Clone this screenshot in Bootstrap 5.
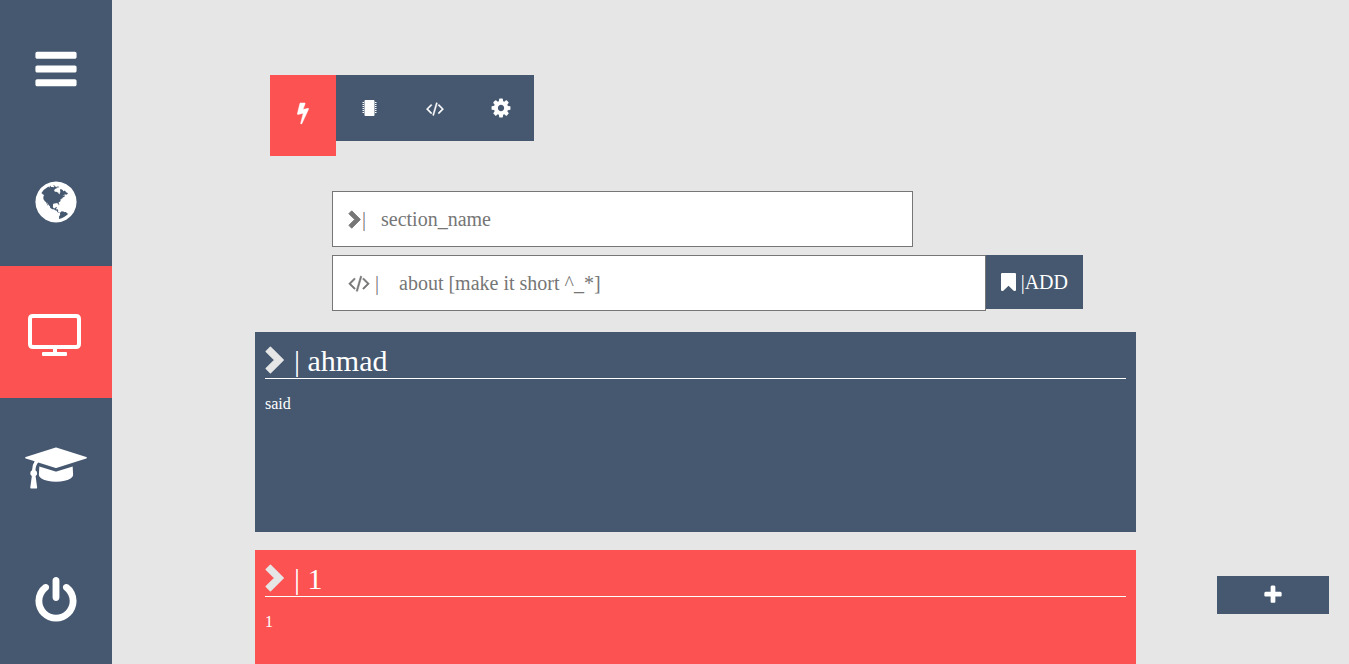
<!DOCTYPE html>
<html lang="en">
<head>
<meta charset="utf-8">
<meta name="viewport" content="width=device-width, initial-scale=1">
<title>Sections</title>
<link href="https://cdn.jsdelivr.net/npm/bootstrap@5.3.0/dist/css/bootstrap.min.css" rel="stylesheet">
<style>
:root { --slate: #455870; --coral: #fc5252; --paper: #e6e6e6; }
body { background: var(--paper); font-family: "Liberation Serif", "Times New Roman", serif; color: #fff; }
svg { fill: currentColor; display: block; flex-shrink: 0; overflow: visible; }
.side { width: 112px; background: var(--slate); }
.side a { color: #fff; padding-top: 6px; }
.side a.active { background: var(--coral); }
.workspace { overflow-y: auto; scrollbar-width: none; padding: 75px 213px 20px 143px; }
.workspace::-webkit-scrollbar { display: none; }
.tabs { height: 116px; padding-left: 15px; }
.tabs button { width: 66px; height: 66px; border: 0; border-radius: 0; background: var(--slate); color: #fff; }
.tabs button.active { height: 81px; background: var(--coral); }
.entry { padding: 0 53px 0 77px; margin-bottom: 21px; }
.field { color: #767676; }
.field.name-field { margin: 0 170px 8px 0; }
.field input { height: 56px; border: 1px solid #767676; border-radius: 0; font-size: 20px; padding: 1px 15px 0 29px; }
.field.about-field input { padding-left: 42px; }
.field input::placeholder { color: #767676; opacity: 1; }
.field svg { position: absolute; left: 16px; top: 0; bottom: 0; margin: auto 0; }
.add { height: 54px; padding: 0 15px; gap: 5px; border: 0; background: var(--slate); color: #fff; font-size: 20px; }
.panel { height: 200px; padding: 10px; margin-bottom: 18px; background: var(--slate); }
.panel.hot { background: var(--coral); }
.panel h2 { height: 37px; gap: 10px; margin-bottom: 13px; border-bottom: 1px solid #fff; font-size: 30px; font-weight: 400; line-height: 38px; }
.panel h2 svg { color: var(--paper); margin-top: 4px; }
.panel p { font-size: 16px; line-height: 24px; margin: 0; }
.plus { right: 20px; bottom: 50px; width: 112px; height: 38px; border: 0; background: var(--slate); color: #fff; }
</style>
</head>
<body>
<svg class="d-none" aria-hidden="true">
  <symbol id="chevron" viewBox="0 0 19 28"><path d="M5.400 1.200L1.200 5.400 9.800 14 1.200 22.600 5.400 26.800 18.200 14z" stroke="currentColor" stroke-width="1.400" stroke-linejoin="round"/></symbol>
  <symbol id="code" viewBox="0 0 1920 1792"><path stroke="currentColor" stroke-width="50" d="M617 1399l-50 50q-10 10-23 10t-23-10l-466-466q-10-10-10-23t10-23l466-466q10-10 23-10t23 10l50 50q10 10 10 23t-10 23l-393 393 393 393q10 10 10 23t-10 23zm591-1067l-373 1291q-4 13-15.500 19.500t-23.500 2.500l-62-17q-13-4-19.500-15.500t-2.500-24.500l373-1291q4-13 15.500-19.500t23.500-2.500l62 17q13 4 19.500 15.500t2.500 24.500zm657 651l-466 466q-10 10-23 10t-23-10l-50-50q-10-10-10-23t10-23l393-393-393-393q-10-10-10-23t10-23l50-50q10-10 23-10t23 10l466 466q10 10 10 23t-10 23z"/></symbol>
</svg>
<div class="d-flex vh-100">
  <nav class="side d-flex flex-column flex-shrink-0" aria-label="Main">
    <a href="#menu" aria-label="Menu" class="d-flex align-items-center justify-content-center h-100">
      <svg width="48" height="48" viewBox="0 0 1792 1792"><path d="M1664 1344v128q0 26-19 45t-45 19H192q-26 0-45-19t-19-45v-128q0-26 19-45t45-19h1408q26 0 45 19t19 45zm0-512v128q0 26-19 45t-45 19H192q-26 0-45-19t-19-45V832q0-26 19-45t45-19h1408q26 0 45 19t19 45zm0-512v128q0 26-19 45t-45 19H192q-26 0-45-19t-19-45V320q0-26 19-45t45-19h1408q26 0 45 19t19 45z"/></svg></a>
    <a href="#world" aria-label="World" class="d-flex align-items-center justify-content-center h-100">
      <svg width="48" height="48" viewBox="0 0 1792 1792"><path d="M896 128q209 0 385.500 103t279.500 279.500 103 385.500-103 385.500-279.500 279.500-385.500 103-385.500-103-279.500-279.500-103-385.500 103-385.500 279.500-279.500 385.500-103zm274 521q-2 1-9.500 9.500t-13.500 9.500q2 0 4.500-5t5-11 3.500-7q6-7 22-15 14-6 52-12 34-8 51 11-2-2 9.500-13t14.500-12q3-2 15-4.500t15-7.500l2-22q-12 1-17.500-7t-6.500-21q0 2-6 8 0-7-4.500-8t-11.500 1-9 1q-10-3-15-7.500t-8-16.500-4-15q-2-5-9.500-11t-9.500-10q-1-2-2.500-5.500t-3-6.500-4-5.500-5.500-2.500-7 5-7.500 10-4.500 5q-3-2-6-1.500t-4.500 1-4.500 3-5 3.500q-3 2-8.500 3t-8.500 2q15-5-1-11-10-4-16-3 9-4 7.500-12t-8.500-14h5q-1-4-8.500-8.500t-17.500-8.500-13-6q-8-5-34-9.500t-33-.5q-5 6-4.500 10.500t4 14 3.500 12.500q1 6-5.500 13t-6.500 12q0 7 14 15.500t10 21.500q-3 8-16 16t-16 12q-5 8-1.500 18.500t10.500 16.500q2 2 1.500 4t-3.500 4.500-5.500 4-6.500 3.500l-3 2q-11 5-20.500-6t-13.500-26q-7-25-16-30-23-8-29 1-5-13-41-26-25-9-58-4 6-1 0-15-7-15-19-12 3-6 4-17.500t1-13.500q3-13 12-23 1-1 7-8.500t9.500-13.500.5-6q35 4 50-11 5-5 11.500-17t10.500-17q9-6 14-5.500t14.500 5.500 14.500 5q14 1 15.500-11t-7.500-20q12 1 3-17-4-7-8-9-12-4-27 5-8 4 2 8-1-1-9.500 10.500t-16.500 17.500-16-5q-1-1-5.500-13.500t-9.500-13.500q-8 0-16 15 3-8-11-15t-24-8q19-12-8-27-7-4-20.500-5t-19.500 4q-5 7-5.500 11.500t5 8 10.500 5.500 11.500 4 8.500 3q14 10 8 14-2 1-8.500 3.500t-11.500 4.500-6 4q-3 4 0 14t-2 14q-5-5-9-17.500t-7-16.500q7 9-25 6l-10-1q-4 0-16 2t-20.500 1-13.500-8q-4-8 0-20 1-4 4-2-4-3-11-9.500t-10-8.500q-46 15-94 41 6 1 12-1 5-2 13-6.500t10-5.500q34-14 42-7l5-5q14 16 20 25-7-4-30-1-20 6-22 12 7 12 5 18-4-3-11.500-10t-14.500-11-15-5q-16 0-22 1-146 80-235 222 7 7 12 8 4 1 5 9t2.500 11 11.500-3q9 8 3 19 1-1 44 27 19 17 21 21 3 11-10 18-1-2-9-9t-9-4q-3 5 .5 18.500t10.500 12.500q-7 0-9.500 16t-2.500 35.500-1 23.500l2 1q-3 12 5.500 34.500t21.500 19.500q-13 3 20 43 6 8 8 9 3 2 12 7.500t15 10 10 10.500q4 5 10 22.500t14 23.500q-2 6 9.500 20t10.500 23q-1 0-2.500 1t-2.500 1q3 7 15.500 14t15.500 13q1 3 2 10t3 11 8 2q2-20-24-62-15-25-17-29-3-5-5.500-15.500t-4.500-14.500q2 0 6 1.500t8.500 3.500 7.500 4 2 3q-3 7 2 17.500t12 18.500 17 19 12 13q6 6 14 19.500t0 13.500q9 0 20 10t17 20q5 8 8 26t5 24q2 7 8.500 13.500t12.500 9.500l16 8 13 7q5 2 18.500 10.500t21.500 11.500q10 4 16 4t14.500-2.500 13.500-3.500q15-2 29 15t21 21q36 19 55 11-2 1 .5 7.500t8 15.500 9 14.500 5.500 8.500q5 6 18 15t18 15q6-4 7-9-3 8 7 20t18 10q14-3 14-32-31 15-49-18 0-1-2.500-5.500t-4-8.500-2.500-8.500 0-7.500 5-3q9 0 10-3.500t-2-12.500-4-13q-1-8-11-20t-12-15q-5 9-16 8t-16-9q0 1-1.500 5.500t-1.500 6.500q-13 0-15-1 1-3 2.500-17.500t3.500-22.500q1-4 5.500-12t7.500-14.500 4-12.500-4.500-9.500-17.500-2.500q-19 1-26 20-1 3-3 10.500t-5 11.500-9 7q-7 3-24 2t-24-5q-13-8-22.500-29t-9.500-37q0-10 2.500-26.500t3-25-5.500-24.500q3-2 9-9.500t10-10.500q2-1 4.500-1.500t4.500 0 4-1.500 3-6q-1-1-4-3-3-3-4-3 7 3 28.500-1.500t27.500 1.500q15 11 22-2 0-1-2.500-9.500t-.5-13.500q5 27 29 9 3 3 15.500 5t17.500 5q3 2 7 5.500t5.500 4.500 5-.5 8.500-6.500q10 14 12 24 11 40 19 44 7 3 11 2t4.500-9.500 0-14-1.500-12.500l-1-8v-18l-1-8q-15-3-18.500-12t1.500-18.500 15-18.500q1-1 8-3.500t15.500-6.500 12.500-8q21-19 15-35 7 0 11-9-1 0-5-3t-7.500-5-4.500-2q9-5 2-16 5-3 7.500-11t7.500-10q9 12 21 2 8-8 1-16 5-7 20.500-10.500t18.500-9.500q7 2 8-2t1-12 3-12q4-5 15-9t13-5l17-11q3-4 0-4 18 2 31-11 10-11-6-20 3-6-3-9.500t-15-5.500q3-1 11.500-.5t10.500-1.500q15-10-7-16-17-5-43 12zm-163 877q206-36 351-189-3-3-12.500-4.500t-12.500-3.500q-18-7-24-8 1-7-2.500-13t-8-9-12.500-8-11-7q-2-2-7-6t-7-5.500-7.500-4.500-8.500-2-10 1l-3 1q-3 1-5.500 2.500t-5.500 3-4 3 0 2.500q-21-17-36-22-5-1-11-5.500t-10.500-7-10-1.500-11.500 7q-5 5-6 15t-2 13q-7-5 0-17.500t2-18.500q-3-6-10.500-4.500t-12 4.500-11.500 8.500-9 6.500-8.500 5.500-8.500 7.500q-3 4-6 12t-5 11q-2-4-11.500-6.500t-9.500-5.500q2 10 4 35t5 38q7 31-12 48-27 25-29 40-4 22 12 26 0 7-8 20.500t-7 21.500q0 6 2 16z"/></svg></a>
    <a href="#screen" aria-label="Screen" aria-current="page" class="active d-flex align-items-center justify-content-center h-100">
      <svg width="56" height="48" viewBox="0 0 56 48"><path fill-rule="evenodd" d="M5 3h43q5 0 5 5v25q0 5-5 5H29v3h9q1 0 1 1v2q0 1-1 1H15q-1 0-1-1v-2q0-1 1-1h10v-3H5q-5 0-5-5V8q0-5 5-5zm0 4q-1 0-1 1v25q0 1 1 1h43q1 0 1-1V8q0-1-1-1z"/></svg></a>
    <a href="#courses" aria-label="Courses" class="d-flex align-items-center justify-content-center h-100">
      <svg width="62" height="48" viewBox="0 0 2304 1792"><path d="M1774 836l18 316q4 69-82 128t-235 93.500-323 34.500-323-34.500-235-93.500-82-128l18-316 574 181q22 7 48 7t48-7zm530-324q0 23-22 31l-1120 352q-4 1-10 1t-10-1l-652-206q-43 34-71 111.500t-34 178.500q63 36 63 109 0 69-58 107l58 433q2 14-8 25-9 11-24 11h-192q-15 0-24-11-10-11-8-25l58-433q-58-38-58-107 0-73 65-111 11-207 98-330l-333-104q-22-8-22-31t22-31l1120-352q4-1 10-1t10 1l1120 352q22 8 22 31z"/></svg></a>
    <a href="#logout" aria-label="Log out" class="d-flex align-items-center justify-content-center h-100">
      <svg width="48" height="48" viewBox="0 0 1792 1792"><path d="M1664 896q0 156-61 298t-164 245-245 164-298 61-298-61-245-164-164-245-61-298q0-182 80.500-343t226.500-270q43-32 95.500-25t83.500 50q32 42 24.500 94.500t-49.500 84.500q-98 74-151.500 181t-53.500 228q0 104 40.500 198.500t109.500 163.500 163.500 109.500 198.500 40.500 198.500-40.500 163.500-109.500 109.500-163.500 40.500-198.500q0-121-53.500-228t-151.500-181q-42-32-49.500-84.500t24.500-94.500q31-43 84-50t95 25q146 109 226.500 270t80.500 343zm-640-768v640q0 52-38 90t-90 38-90-38-38-90v-640q0-52 38-90t90-38 90 38 38 90z"/></svg></a>
  </nav>

  <main class="workspace flex-grow-1">
    <div class="tabs d-flex align-items-start">
      <button type="button" aria-label="Quick" class="active d-flex align-items-center justify-content-center p-0 pb-1"><svg width="12" height="21" viewBox="440 128 910 1664"><path d="M1333 566q18 20 7 44l-540 1157q-13 25-42 25-4 0-14-2-17-5-25.500-19t-4.500-30l197-808-406 101q-4 1-12 1-18 0-31-11-18-15-13-39l201-825q4-14 16-23t28-9h328q19 0 32 12.500t13 29.500q0 8-5 18l-171 463 396-98q8-2 12-2 19 0 34 15z" stroke="currentColor" stroke-width="40"/></svg></button>
      <button type="button" aria-label="Hardware" class="d-flex align-items-center justify-content-center p-0"><svg width="15" height="16" viewBox="0 0 15 16"><path d="M3.500 0h8q1 0 1 1v14q0 1-1 1h-8q-1 0-1-1V1q0-1 1-1zM.5 2H2v1H.5zm0 2H2v1H.5zm0 2H2v1H.5zm0 2H2v1H.5zm0 2H2v1H.5zm0 2H2v1H.5zM13 2h1.500v1H13zm0 2h1.500v1H13zm0 2h1.500v1H13zm0 2h1.500v1H13zm0 2h1.500v1H13zm0 2h1.500v1H13z"/></svg></button>
      <button type="button" aria-label="Code" class="d-flex align-items-center justify-content-center p-0"><svg width="18" height="17"><use href="#code"/></svg></button>
      <button type="button" aria-label="Settings" class="d-flex align-items-center justify-content-center p-0"><svg width="22" height="22" viewBox="0 0 1792 1792"><path d="M1152 896q0-106-75-181t-181-75-181 75-75 181 75 181 181 75 181-75 75-181zm512-109v222q0 12-8 23t-20 13l-185 28q-19 54-39 91 35 50 107 138 10 12 10 25t-9 23q-27 37-99 108t-94 71q-12 0-26-9l-138-108q-44 23-91 38-16 136-29 186-7 28-36 28h-222q-14 0-24.500-8.500t-11.500-21.500l-28-184q-49-16-90-37l-141 107q-10 9-25 9-14 0-25-11-126-114-165-168-7-10-7-23 0-12 8-23 15-21 51-66.500t54-70.500q-27-50-41-99l-183-27q-13-2-21-12.500t-8-23.500v-222q0-12 8-23t19-13l186-28q14-46 39-92-40-57-107-138-10-12-10-24 0-10 9-23 26-36 98.500-107.500t94.500-71.500q13 0 26 10l138 107q44-23 91-38 16-136 29-186 7-28 36-28h222q14 0 24.500 8.500t11.500 21.500l28 184q49 16 90 37l142-107q9-9 24-9 13 0 25 10 129 119 165 170 7 8 7 22 0 12-8 23-15 21-51 66.500t-54 70.500q26 50 41 98l183 28q13 2 21 12.500t8 23.500z"/></svg></button>
    </div>

    <form class="entry">
      <div class="field name-field position-relative">
        <input type="text" class="w-100 d-block" aria-label="Section name" placeholder="|&nbsp;&nbsp;&nbsp;section_name">
        <svg width="13" height="19"><use href="#chevron"/></svg>
      </div>
      <div class="d-flex align-items-start">
        <div class="field about-field position-relative flex-grow-1">
          <input type="text" class="w-100 d-block" aria-label="About" placeholder="|&nbsp;&nbsp;&nbsp;&nbsp;about [make it short ^_*]">
          <svg width="22" height="20"><use href="#code"/></svg>
        </div>
        <button type="button" class="add d-flex align-items-center"><svg width="15" height="18" viewBox="256 128 1280 1505" preserveAspectRatio="none"><path d="M1420 128q23 0 44 9 33 13 52.500 41t19.500 62v1289q0 34-19.500 62t-52.500 41q-19 8-44 8-48 0-83-32l-441-424-441 424q-36 33-83 33-23 0-44-9-33-13-52.500-41t-19.500-62v-1289q0-34 19.500-62t52.500-41q21-9 44-9h1048z"/></svg><span>|ADD</span></button>
      </div>
    </form>

    <section class="panel">
      <h2 class="d-flex align-items-start"><svg width="19" height="28"><use href="#chevron"/></svg><span>| ahmad</span></h2>
      <p>said</p>
    </section>
    <section class="panel hot">
      <h2 class="d-flex align-items-start"><svg width="19" height="28"><use href="#chevron"/></svg><span>| 1</span></h2>
      <p>1</p>
    </section>
  </main>
</div>
<button type="button" aria-label="Add section" class="plus position-fixed d-flex align-items-center justify-content-center"><svg width="22" height="22" viewBox="0 0 1792 1792"><path d="M1600 736v192q0 40-28 68t-68 28h-416v416q0 40-28 68t-68 28h-192q-40 0-68-28t-28-68v-416h-416q-40 0-68-28t-28-68v-192q0-40 28-68t68-28h416v-416q0-40 28-68t68-28h192q40 0 68 28t28 68v416h416q40 0 68 28t28 68z"/></svg></button>
<script src="https://cdn.jsdelivr.net/npm/bootstrap@5.3.0/dist/js/bootstrap.bundle.min.js"></script>
</body>
</html>
